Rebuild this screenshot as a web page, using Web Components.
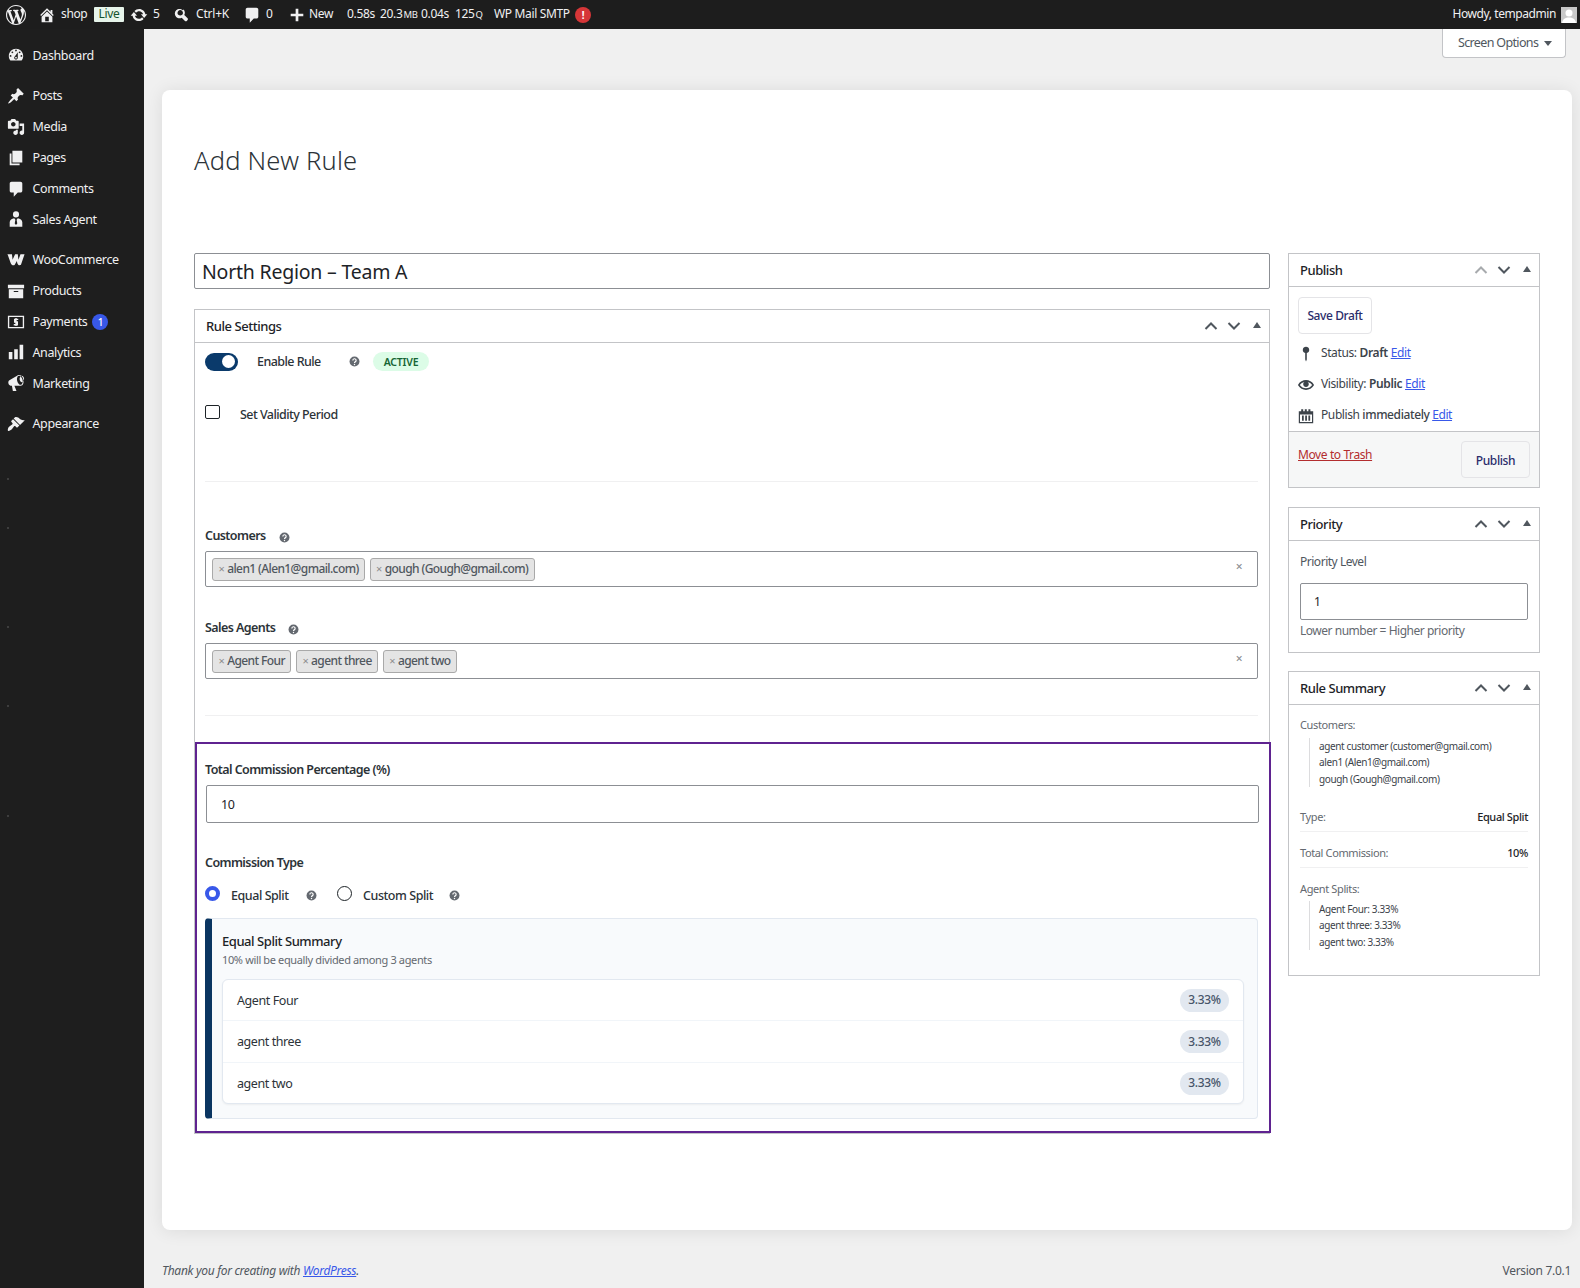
<!DOCTYPE html>
<html lang="en">
<head>
<meta charset="utf-8">
<title>Add New Rule</title>
<style>
    html, body { margin: 0; padding: 0; background: #f0f0f0; }
    body { font: 12.5px/1.4 "Noto Sans", "Open Sans", sans-serif; letter-spacing: -.3px; color: #1d2327; }
</style>
</head>
<body>
<wp-admin-bar></wp-admin-bar>
<wp-layout>
    <wp-side-menu slot="side">
        <wp-menu-item icon="dashboard" class="first">Dashboard</wp-menu-item>
        <wp-menu-item icon="pin" class="sep">Posts</wp-menu-item>
        <wp-menu-item icon="media">Media</wp-menu-item>
        <wp-menu-item icon="pages">Pages</wp-menu-item>
        <wp-menu-item icon="comment">Comments</wp-menu-item>
        <wp-menu-item icon="agent">Sales Agent</wp-menu-item>
        <wp-menu-item icon="woo" class="sep">WooCommerce</wp-menu-item>
        <wp-menu-item icon="archive">Products</wp-menu-item>
        <wp-menu-item icon="payment" badge="1">Payments</wp-menu-item>
        <wp-menu-item icon="chart">Analytics</wp-menu-item>
        <wp-menu-item icon="megaphone">Marketing</wp-menu-item>
        <wp-menu-item icon="brush" class="sep">Appearance</wp-menu-item>
    </wp-side-menu>

    <wp-screen-options></wp-screen-options>
    <wp-card>
        <wp-page-title slot="title">Add New Rule</wp-page-title>

        <wp-title-input slot="main">North Region – Team A</wp-title-input>
        <wp-postbox slot="main" heading="Rule Settings">
            <rule-settings></rule-settings>
        </wp-postbox>

        <wp-postbox slot="side" heading="Publish" noup>
            <publish-box></publish-box>
        </wp-postbox>
        <wp-postbox slot="side" heading="Priority">
            <priority-box></priority-box>
        </wp-postbox>
        <wp-postbox slot="side" heading="Rule Summary" style="margin-top:-1px">
            <summary-box></summary-box>
        </wp-postbox>
    </wp-card>
    <wp-footer></wp-footer>
</wp-layout>

<script>
(function () {
    const ICONS = {
        wp: '<path d="M20 10c0-5.51-4.49-10-10-10C4.48 0 0 4.49 0 10c0 5.52 4.48 10 10 10 5.51 0 10-4.48 10-10zM7.78 15.37L4.37 6.22c.55-.02 1.17-.08 1.17-.08.5-.06.44-1.13-.06-1.11 0 0-1.45.11-2.37.11-.18 0-.37 0-.58-.01C4.12 2.69 6.87 1.11 10 1.11c2.33 0 4.45.87 6.05 2.34-.68-.11-1.65.39-1.65 1.58 0 .74.45 1.36.9 2.1.35.61.55 1.36.55 2.46 0 1.49-1.4 5-1.4 5l-3.03-8.37c.54-.02.82-.17.82-.17.5-.05.44-1.25-.06-1.22 0 0-1.44.12-2.38.12-.87 0-2.33-.12-2.33-.12-.5-.03-.56 1.2-.06 1.22l.92.08 1.26 3.41zM17.41 10c.24-.64.74-1.87.43-4.25.7 1.29 1.05 2.71 1.05 4.25 0 3.29-1.73 6.24-4.4 7.78.97-2.59 1.94-5.2 2.92-7.78zM6.1 18.09C3.12 16.65 1.11 13.53 1.11 10c0-1.3.23-2.48.72-3.59C3.25 10.3 4.67 14.2 6.1 18.09zm4.03-6.63l2.58 6.98c-.86.29-1.76.45-2.71.45-.79 0-1.57-.11-2.29-.33.81-2.38 1.62-4.74 2.42-7.1z"/>',
        home: '<path d="M16 8.5l1.53 1.53-1.06 1.06L10 4.62l-6.47 6.47-1.06-1.06L10 2.5l4 4v-2h2v4zm-6-2.46l6 5.99V18H4v-5.97zM12 17v-5H8v5h4z"/>',
        update: '<path d="M10.2 3.28c3.53 0 6.43 2.61 6.92 6h2.08l-3.5 4-3.5-4h2.32c-.45-1.97-2.21-3.45-4.32-3.45-1.45 0-2.73.71-3.54 1.78L4.95 5.66C6.23 4.2 8.11 3.28 10.2 3.28zm-.4 13.44c-3.52 0-6.43-2.61-6.92-6H.8l3.5-4c1.17 1.33 2.33 2.67 3.5 4H5.48c.45 1.97 2.21 3.45 4.32 3.45 1.45 0 2.73-.71 3.54-1.78l1.71 1.95c-1.28 1.46-3.15 2.38-5.25 2.38z"/>',
        search: '<path d="M12.14 4.78c1.56 1.57 1.83 3.95.81 5.8l3.48 3.49c.51.51.51 1.33 0 1.83l-.92.92c-.5.5-1.32.5-1.83 0l-3.48-3.49c-1.85 1.03-4.23.76-5.8-.81-1.91-1.91-1.91-5.02 0-6.93 1.91-1.91 5.03-1.91 6.94 0zm-1.42 5.51c1.13-1.13 1.13-2.96 0-4.09s-2.96-1.13-4.09 0-1.13 2.96 0 4.09 2.96 1.13 4.09 0z"/>',
        comment: '<path d="M5 2h10c1.1 0 2 .9 2 2v8c0 1.1-.9 2-2 2h-3l-4.5 4.5V14H5c-1.1 0-2-.9-2-2V4c0-1.1.9-2 2-2z"/>',
        plus: '<path d="M17 8.500v3h-5.500V17h-3v-5.500H3v-3h5.500V3h3v5.500H17z"/>',
        dashboard: '<path fill-rule="evenodd" d="M3.76 16h12.48c1.1-1.37 1.76-3.11 1.76-5 0-4.42-3.58-8-8-8s-8 3.58-8 8c0 1.89.66 3.63 1.76 5zM10 4c.55 0 1 .45 1 1s-.45 1-1 1-1-.45-1-1 .45-1 1-1zM6 6c.55 0 1 .45 1 1s-.45 1-1 1-1-.45-1-1 .45-1 1-1zm8 0c.55 0 1 .45 1 1s-.45 1-1 1-1-.45-1-1 .45-1 1-1zm-5.37 5.55L12 7v6c0 1.1-.9 2-2 2s-2-.9-2-2c0-.57.24-1.08.63-1.45zM4 10c.55 0 1 .45 1 1s-.45 1-1 1-1-.45-1-1 .45-1 1-1zm12 0c.55 0 1 .45 1 1s-.45 1-1 1-1-.45-1-1 .45-1 1-1zm-5 3c0-.55-.45-1-1-1s-1 .45-1 1 .45 1 1 1 1-.45 1-1z"/>',
        pin: '<path d="M10.44 3.02l1.82-1.82 6.36 6.35-1.83 1.82c-1.05-.68-2.48-.57-3.41.36l-.75.75c-.92.93-1.04 2.35-.35 3.41l-1.83 1.82-2.41-2.41-2.8 2.79c-.42.42-3.38 2.71-3.8 2.29s1.86-3.39 2.28-3.81l2.79-2.79L4.1 9.36l1.83-1.82c1.05.69 2.48.57 3.4-.36l.75-.75c.93-.92 1.05-2.35.36-3.41z"/>',
        media: '<path fill-rule="evenodd" d="M13 11V4c0-.55-.45-1-1-1h-1.67L9 1H5L3.67 3H2c-.55 0-1 .45-1 1v7c0 .55.45 1 1 1h10c.55 0 1-.45 1-1zM7 4.500c1.380 0 2.500 1.120 2.500 2.500S8.380 9.500 7 9.500 4.500 8.380 4.500 7 5.620 4.500 7 4.500zM14 6h5v10.500c0 1.380-1.120 2.500-2.500 2.500S14 17.880 14 16.500s1.120-2.500 2.500-2.500c.17 0 .34.02.5.05V9h-3V6zm-4 8.050V13h2v3.500c0 1.380-1.120 2.500-2.500 2.500S7 17.880 7 16.500 8.120 14 9.500 14c.17 0 .34.02.5.05z"/>',
        pages: '<path d="M6 15V2h11v13H6zm-1 1h9v2H3V5h2v11z"/>',
        agent: '<path d="M10 1.500a3.400 3.400 0 1 1 0 6.800 3.400 3.400 0 0 1 0-6.800zM3 18.500v-5c0-2.400 2.400-4.200 5-4.400l1.300 1.600-.7 4.300 1.400 1.600 1.400-1.600-.7-4.300 1.300-1.600c2.600.2 5 2 5 4.400v5z"/>',
        woo: '<path d="M.5 3.500h5l.7 6.200 2.800-6.200h3l.7 6.200 2.300-6.200h4.500l-3.800 11.300c-.4 1.100-2.300 1.300-3.200.4-.8-.8-1.400-2.700-1.500-4.200l-2.400 4.200c-.6 1-2.500 1-3.200 0C3.800 13.800 2.500 8 .5 3.500z"/>',
        archive: '<path fill-rule="evenodd" d="M19 3H1v4h18V3zM2 8v10h16V8H2zm10.500 3.200h-5V10h5v1.200z"/>',
        payment: '<path fill-rule="evenodd" d="M1 3h18v14H1V3zm1.500 1.500v11h15v-11h-15z"/><path d="M12.500 7H8.500v3h3v3h-4M10 5.500V14.500" fill="none" stroke="currentColor" stroke-width="1.500"/>',
        chart: '<path d="M18 18V2h-4v16h4zm-6 0V7H8v11h4zm-6 0v-8H2v8h4z"/>',
        megaphone: '<path fill-rule="evenodd" d="M18.150 5.940c.46 1.620.38 3.220-.02 4.480-.42 1.280-1.260 2.180-2.300 2.480-.16.06-.26.06-.4.06-.06.02-.12.02-.18.02-.06.02-.14.02-.22.02H8.230l2.220 5.500c.02.14-.06.26-.14.34-.08.1-.24.16-.34.16H6.950c-.1 0-.26-.06-.34-.16-.08-.08-.16-.2-.14-.34l-1-5.500H4.250l-.02-.02c-.5.06-1.080-.18-1.540-.62s-.88-1.080-1.060-1.880c-.24-.8-.2-1.560-.02-2.200.18-.62.58-1.080 1.060-1.300l.02-.02 9-5.400c.1-.06.18-.1.24-.16.06-.04.14-.08.24-.12.16-.08.28-.12.500-.18 1.040-.3 2.240.1 3.220.98s1.840 2.240 2.260 3.860zm-2.580 5.980c.4-.1.74-.34 1.040-.7.58-.7.86-1.760.86-3.040 0-.64-.1-1.300-.26-2-.34-1.360-1.020-2.500-1.780-3.240s-1.680-1.100-2.460-.88c-.82.22-1.400.96-1.700 2-.32 1.040-.28 2.360.06 3.720.38 1.360 1 2.500 1.800 3.240.78.74 1.620 1.100 2.440.9zM14 5.500a2.500 3.500 0 1 1 0 .01z"/>',
        brush: '<path d="M14.480 11.060L7.410 3.990l1.500-1.500c.5-.56 2.300-.47 3.510.32 1.210.8 1.430 1.280 2.910 2.100 1.180.64 2.450 1.260 4.450.85zm-.71.71L6.700 4.700 4.930 6.470c-.39.39-.39 1.020 0 1.410l1.060 1.060c.39.39.39 1.030 0 1.420-.6.6-1.430 1.110-2.210 1.690-.35.26-.7.53-1.010.84C1.430 13.230.5 16.900 1.100 17.500c.17.17.44.2.66.2 1.240 0 2.820-1.130 3.600-1.900.33-.33.6-.68.86-1.020.58-.79 1.090-1.620 1.690-2.220.39-.39 1.020-.39 1.410 0l1.060 1.060c.39.39 1.020.39 1.410 0z"/>',
        status: '<path d="M10 1a4 4 0 0 1 1 7.870V17l-1 2.500L9 17V8.870A4 4 0 0 1 10 1z"/>',
        eye: '<path d="M19.700 9.400C17.700 6 14 3.900 10 3.900S2.300 6 .3 9.400L0 10l.3.6c2 3.400 5.700 5.500 9.700 5.500s7.700-2.100 9.700-5.500l.3-.6-.3-.6zM10 14.100c-3.100 0-6-1.600-7.700-4.100C3.600 8 5.700 6.600 8 6.100c-.9.6-1.500 1.700-1.500 2.900 0 1.900 1.600 3.500 3.500 3.500s3.500-1.600 3.500-3.500c0-1.200-.6-2.300-1.500-2.900 2.300.5 4.400 1.900 5.700 3.900-1.700 2.500-4.600 4.100-7.700 4.100z"/>',
        calendar: '<path fill-rule="evenodd" d="M1 4h3V1.500h2.500V4h2V1.500H11V4h2V1.500h2.500V4H19v15H1V4zm1.500 4v9.500h15V8h-15z"/><path d="M5 9.500h2.200V16H5zM9 9.500h2.200V16H9zM13 9.500h2.200V16H13z"/>',
        help: '<circle cx="10" cy="10" r="9"/><path d="M7 8a3 3 0 1 1 4.300 2.700c-.9.5-1.300 1-1.300 2" fill="none" stroke="#fff" stroke-width="2.200"/><circle cx="10" cy="15.300" r="1.300" fill="#fff"/>'
    };

    // plain shadow element: css + markup, nothing else
    function define(name, css, html) {
        const template = document.createElement('template');
        template.innerHTML = `<style>${css}</style>${html}`;
        customElements.define(name, class extends HTMLElement {
            constructor () {
                super();
                this.attachShadow({mode: 'open'});
                this.shadowRoot.appendChild(template.content.cloneNode(true));
            }
        });
    }

    class WpIcon extends HTMLElement {
        constructor () {
            super();
            this.attachShadow({mode: 'open'});
        }
        connectedCallback () {
            const size = this.getAttribute('size') || 20;
            this.shadowRoot.innerHTML = `<style>:host { display: inline-flex; flex: none; } svg { display: block; fill: currentColor; }</style>
                <svg width="${size}" height="${size}" viewBox="0 0 20 20">${ICONS[this.getAttribute('name')]}</svg>`;
        }
    }
    customElements.define('wp-icon', WpIcon);

    define('wp-admin-bar', `
        :host { display: flex; align-items: center; height: 29px; background: #1d1d1d; color: #f0f0f1; font-size: 12px; letter-spacing: -.35px; white-space: nowrap; }
        .i { display: flex; align-items: center; flex: none; }
        wp-icon { color: #f0f0f1; }
        .live { width: 30px; height: 15px; margin-left: 8px; background: #e6f4ea; color: #14532d; border-radius: 1px; display: flex; align-items: center; justify-content: center; font-size: 12px; }
        .alert { width: 16px; height: 16px; margin-left: 5px; border-radius: 50%; background: #d63638; color: #fff; font-size: 10px; font-weight: 700; display: flex; align-items: center; justify-content: center; }
        small { font-size: 9.500px; margin-left: 1px; }
        .howdy { margin-left: auto; margin-right: 5px; letter-spacing: -.42px; }
        .avatar { width: 16px; height: 16px; margin-right: 3px; background: #c8c8c8; overflow: hidden; }
        .avatar svg { display: block; }
    `, `
        <wp-icon class="i" name="wp" size="20" style="margin-left:6px"></wp-icon>
        <wp-icon class="i" name="home" size="18" style="margin-left:12px"></wp-icon>
        <span class="i" style="margin-left:5px;width:25px">shop</span>
        <span class="i live">Live</span>
        <wp-icon class="i" name="update" size="18" style="margin-left:6px"></wp-icon>
        <span class="i" style="margin-left:5px;width:7px">5</span>
        <wp-icon class="i" name="search" size="19" style="margin-left:12px"></wp-icon>
        <span class="i" style="margin-left:5px;width:34px;letter-spacing:-.2px">Ctrl+K</span>
        <wp-icon class="i" name="comment" size="18" style="margin-left:13px"></wp-icon>
        <span class="i" style="margin-left:5px;width:8px">0</span>
        <wp-icon class="i" name="plus" size="18" style="margin-left:14px"></wp-icon>
        <span class="i" style="margin-left:3px;width:24px">New</span>
        <span class="i" style="margin-left:14px;width:27px">0.58s</span>
        <span class="i" style="margin-left:6px;width:36px">20.3<small>MB</small></span>
        <span class="i" style="margin-left:5px;width:28px">0.04s</span>
        <span class="i" style="margin-left:6px;width:27px">125<small>Q</small></span>
        <span class="i" style="margin-left:12px;width:76px">WP Mail SMTP</span>
        <span class="i alert">!</span>
        <span class="i howdy">Howdy, tempadmin</span>
        <span class="i avatar"><svg width="16" height="16" viewBox="0 0 16 16"><circle cx="8" cy="6" r="3.500" fill="#fff"/><path d="M1 16c.5-4 3.500-5.500 7-5.500s6.500 1.500 7 5.500z" fill="#fff"/></svg></span>
    `);

    define('wp-layout', `
        :host { display: grid; grid-template-columns: 144px 1fr; min-height: 1259px; }
        .side { background: #1e1e1e; }
        .main { padding: 0 8px 0 18px; display: flex; flex-direction: column; }
    `, `
        <div class="side"><slot name="side"></slot></div>
        <div class="main"><slot></slot></div>
    `);

    define('wp-side-menu', `
        :host { display: block; padding-top: 11px; color: #f0f0f1; }
        i { display: block; width: 2px; height: 2px; background: #3d3d3d; margin-left: 7px; }
        ::slotted(.sep) { margin-top: 9.500px; }
    `, `
        <slot></slot>
        <i style="margin-top:39px"></i>
        <i style="margin-top:47px"></i>
        <i style="margin-top:97px"></i>
        <i style="margin-top:77px"></i>
        <i style="margin-top:108px"></i>
    `);

    class WpMenuItem extends HTMLElement {
        constructor () {
            super();
            this.attachShadow({mode: 'open'});
        }
        connectedCallback () {
            const badge = this.getAttribute('badge');
            this.shadowRoot.innerHTML = `<style>
                :host { display: flex; align-items: center; height: 30.900px; color: #f0f0f1; letter-spacing: -.38px; }
                wp-icon { margin-left: 7px; width: 18px; margin-right: 7.500px; }
                b { margin-left: 5px; width: 16px; height: 16px; border-radius: 50%; background: #3858e9; color: #fff; font-size: 10px; font-weight: 500; display: flex; align-items: center; justify-content: center; }
            </style>
            <wp-icon name="${this.getAttribute('icon')}" size="18"></wp-icon><slot></slot>${badge ? `<b>${badge}</b>` : ''}`;
        }
    }
    customElements.define('wp-menu-item', WpMenuItem);

    define('wp-screen-options', `
        :host { display: flex; align-self: flex-end; align-items: center; gap: 6px; width: 124px; height: 29px; box-sizing: border-box; margin-right: 6px; padding-left: 15px; background: #fff; border: 1px solid #c3c4c7; border-top: 0; border-radius: 0 0 4px 4px; color: #50575e; letter-spacing: -.65px; }
        i { border: 4px solid transparent; border-top: 5px solid #50575e; border-bottom: 0; }
    `, `<span>Screen Options</span><i></i>`);

    define('wp-card', `
        :host { display: block; box-sizing: border-box; height: 1140px; margin-top: 32px; padding: 0 32px; background: #fff; border-radius: 8px; box-shadow: 0 1px 18px rgba(0, 0, 0, .09); }
        .cols { display: grid; grid-template-columns: 1076px 252px; column-gap: 18px; }
        .col { display: flex; flex-direction: column; }
        .side { gap: 19px; }
    `, `
        <slot name="title"></slot>
        <div class="cols">
            <div class="col"><slot name="main"></slot></div>
            <div class="col side"><slot name="side"></slot></div>
        </div>
    `);

    define('wp-page-title', `
        :host { display: flex; align-items: center; height: 163px; padding-bottom: 22px; box-sizing: border-box; font-size: 25.500px; font-weight: 300; color: #2c3338; letter-spacing: .22px; }
    `, `<slot></slot>`);

    define('wp-title-input', `
        :host { display: flex; align-items: center; height: 36px; box-sizing: border-box; margin-bottom: 20px; padding: 2px 0 0 7px; border: 1px solid #8c8f94; border-radius: 2px; font-size: 19.500px; letter-spacing: -.22px; }
    `, `<slot></slot>`);

    class WpPostbox extends HTMLElement {
        constructor () {
            super();
            this.attachShadow({mode: 'open'});
        }
        connectedCallback () {
            const up = this.hasAttribute('noup') ? '#a7aaad' : '#50575e';
            this.shadowRoot.innerHTML = `<style>
                :host { display: block; border: 1px solid #c3c4c7; background: #fff; }
                header { display: flex; align-items: center; height: 32px; padding: 0 1px 0 11px; border-bottom: 1px solid #c3c4c7; font-size: 13px; font-weight: 500; color: #1d2327; letter-spacing: -.45px; }
                h2 { flex: 1; margin: 1px 0 0; font: inherit; }
                span { width: 23px; display: flex; justify-content: center; }
                svg { display: block; }
                .tri { margin-top: -2px; padding-left: 1px; box-sizing: border-box; }
            </style>
            <header><h2>${this.getAttribute('heading')}</h2>
                <span><svg width="14" height="10" viewBox="0 0 14 10"><path d="M1.500 8L7 2.500 12.500 8" fill="none" stroke="${up}" stroke-width="2"/></svg></span>
                <span><svg width="14" height="10" viewBox="0 0 14 10"><path d="M1.500 2L7 7.500 12.500 2" fill="none" stroke="#50575e" stroke-width="2"/></svg></span>
                <span class="tri"><svg width="8" height="6" viewBox="0 0 8 6"><path d="M4 0L8 6H0z" fill="#50575e"/></svg></span>
            </header><slot></slot>`;
        }
    }
    customElements.define('wp-postbox', WpPostbox);

    define('help-tip', `
        :host { display: inline-flex; flex: none; color: #646970; }
    `, `<wp-icon name="help" size="11"></wp-icon>`);

    define('tag-select', `
        :host { display: flex; align-items: center; gap: 4.500px; height: 36px; box-sizing: border-box; padding-left: 6px; padding-right: 15px; border: 1px solid #8c8f94; border-radius: 2px; color: #50575e; }
        .clear { margin-left: auto; margin-top: -3px; font-size: 12px; color: #8c8f94; }
    `, `<slot></slot><span class="clear">×</span>`);

    define('tag-chip', `
        :host { display: flex; align-items: center; height: 23px; box-sizing: border-box; padding: 0 5.500px; background: #e4e4e4; border: 1px solid #a9a9a9; border-radius: 3px; color: #50575e; font-size: 12px; letter-spacing: -.6px; }
        b { font-weight: 400; color: #8c8c8c; margin-right: 3px; font-size: 11px; }
    `, `<b>×</b><slot></slot>`);

    define('rule-settings', `
        :host { display: block; padding-left: 10px; padding-right: 11px; font-weight: 500; color: #2c3338; letter-spacing: -.55px; }
        .toggle-row { display: flex; align-items: center; height: 19px; margin-top: 9px; }
        .toggle { width: 33px; height: 18px; border-radius: 9px; background: #0a3a6b; display: flex; align-items: center; justify-content: flex-end; padding-right: 3px; box-sizing: border-box; }
        .toggle i { width: 13px; height: 13px; border-radius: 50%; background: #fff; }
        .toggle-row > span:first-of-type { padding-top: 1px; }
        .active { width: 56px; height: 19px; padding-top: 1px; box-sizing: border-box; margin-left: 13px; border-radius: 10px; background: #dcfce7; color: #166534; font-size: 10.500px; font-weight: 600; display: flex; align-items: center; justify-content: center; letter-spacing: -.2px; }
        .valid { display: flex; align-items: flex-start; height: 20px; margin-top: 34px; }
        .check { width: 15px; height: 14px; box-sizing: border-box; border: 1px solid #1d2327; border-radius: 2px; margin-right: 20px; }
        .valid span { margin-top: 1px; }
        hr { height: 1px; border: 0; background: #f0f0f1; margin: 56px 0 0; }
        .label { display: flex; align-items: center; height: 18px; font-weight: 600; letter-spacing: -.58px; }
        .label help-tip { margin-left: 13px; margin-top: 2px; }
        tag-select { margin-top: 6px; }
        .commission { margin: 26px -13px 0 -10px; height: 391px; box-sizing: border-box; border: 2px solid #5f2390; padding: 17px 0 0 8px; }
        .input { display: flex; align-items: center; width: 1053px; height: 38px; box-sizing: border-box; margin: 6px 0 0 1px; padding: 1px 0 0 14px; border: 1px solid #8c8f94; border-radius: 2px; font-weight: 400; color: #1d2327; letter-spacing: -.3px; }
        .radios { display: flex; align-items: center; height: 20px; margin-top: 13px; letter-spacing: -.45px; }
        .radios span { padding-top: 1px; }
        .radio { width: 15px; height: 15px; box-sizing: border-box; border-radius: 50%; border: 1px solid #1d2327; margin-top: -4px; }
        .radio.on { border: 4px solid #3858e9; }
        .split { width: 1053px; height: 201px; box-sizing: border-box; margin-top: 13px; background: #f8fafc; border: 1px solid #e2e8f0; border-left: 7px solid #0a3561; border-radius: 4px; padding: 12px 13px 0 10px; }
        h4 { margin: 0; height: 20px; display: flex; align-items: center; font: 500 13px/1 "Noto Sans", sans-serif; letter-spacing: -.45px; color: #1d2327; }
        p { margin: 1px 0 0; height: 16px; font-size: 11px; line-height: 16px; font-weight: 400; color: #646970; letter-spacing: -.36px; }
        .list { margin-top: 11px; height: 125px; box-sizing: border-box; background: #fff; border: 1px solid #e2e8f0; border-radius: 6px; box-shadow: 0 1px 2px rgba(0, 0, 0, .05); }
        .row { display: flex; align-items: center; justify-content: space-between; height: 41.300px; box-sizing: border-box; padding: 1px 14px 0; border-bottom: 1px solid #f1f5f9; font-weight: 400; color: #2c3338; letter-spacing: -.42px; }
        .row:last-child { border-bottom: 0; }
        .row b { width: 49px; height: 23px; border-radius: 12px; background: #e2e8f0; color: #475569; font-weight: 500; font-size: 12px; letter-spacing: -.3px; display: flex; align-items: center; justify-content: center; }
    `, `
        <div class="toggle-row">
            <div class="toggle"><i></i></div>
            <span style="margin-left:19px;width:92px">Enable Rule</span>
            <help-tip style="margin-top:-1px"></help-tip>
            <span class="active">ACTIVE</span>
        </div>
        <div class="valid"><div class="check"></div><span>Set Validity Period</span></div>
        <hr>
        <div class="label" style="margin-top:45px"><span>Customers</span><help-tip></help-tip></div>
        <tag-select>
            <tag-chip>alen1 (Alen1@gmail.com)</tag-chip>
            <tag-chip>gough (Gough@gmail.com)</tag-chip>
        </tag-select>
        <div class="label" style="margin-top:32px"><span>Sales Agents</span><help-tip></help-tip></div>
        <tag-select>
            <tag-chip>Agent Four</tag-chip>
            <tag-chip>agent three</tag-chip>
            <tag-chip>agent two</tag-chip>
        </tag-select>
        <hr style="margin-top:36px">
        <div class="commission">
            <div class="label">Total Commission Percentage (%)</div>
            <div class="input">10</div>
            <div class="label" style="margin-top:31px">Commission Type</div>
            <div class="radios">
                <div class="radio on"></div>
                <span style="margin-left:11px;width:75px">Equal Split</span>
                <help-tip></help-tip>
                <div class="radio" style="margin-left:20px"></div>
                <span style="margin-left:11px;width:86px">Custom Split</span>
                <help-tip></help-tip>
            </div>
            <div class="split">
                <h4>Equal Split Summary</h4>
                <p>10% will be equally divided among 3 agents</p>
                <div class="list">
                    <div class="row"><span>Agent Four</span><b>3.33%</b></div>
                    <div class="row"><span>agent three</span><b>3.33%</b></div>
                    <div class="row"><span>agent two</span><b>3.33%</b></div>
                </div>
            </div>
        </div>
    `);

    define('publish-box', `
        :host { display: block; color: #3c434a; font-size: 12px; letter-spacing: -.4px; }
        .top { padding: 10px 9px 0; height: 144px; box-sizing: border-box; }
        .btn { display: flex; align-items: center; justify-content: center; height: 37px; box-sizing: border-box; padding-top: 2px; border: 1px solid #e4e4e7; border-radius: 4px; color: #2a2d6b; font-weight: 500; }
        .row { display: flex; align-items: center; height: 31px; }
        .row wp-icon { width: 16px; margin-right: 7px; color: #3c434a; }
        .row b { font-weight: 600; margin: 0 3px; }
        a { color: #3858e9; text-decoration: underline; }
        .foot { display: flex; justify-content: space-between; height: 56px; box-sizing: border-box; padding: 9px 9px 0; border-top: 1px solid #c3c4c7; background: #f6f7f7; }
        .foot a { color: #b32d2e; margin-top: 6px; }
        .foot .btn { padding-top: 4px; }
    `, `
        <div class="top">
            <div class="btn" style="width:74px;margin-bottom:4px">Save Draft</div>
            <div class="row"><wp-icon name="status" size="16"></wp-icon><span>Status:<b>Draft</b><a>Edit</a></span></div>
            <div class="row"><wp-icon name="eye" size="16"></wp-icon><span>Visibility:<b>Public</b><a>Edit</a></span></div>
            <div class="row"><wp-icon name="calendar" size="16"></wp-icon><span>Publish <b style="margin:0;font-weight:500">immediately</b> <a>Edit</a></span></div>
        </div>
        <div class="foot"><a>Move to Trash</a><div class="btn" style="width:69px">Publish</div></div>
    `);

    define('priority-box', `
        :host { display: block; padding: 0 11px; height: 111px; box-sizing: border-box; color: #50575e; font-size: 12px; letter-spacing: -.48px; }
        .l { display: flex; align-items: center; height: 42px; padding-top: 1px; box-sizing: border-box; }
        .input { display: flex; align-items: center; height: 37px; box-sizing: border-box; padding: 2px 0 0 13px; border: 1px solid #8c8f94; border-radius: 2px; color: #1d2327; }
        .h { display: flex; align-items: center; height: 20px; margin-top: 1px; color: #646970; }
    `, `
        <div class="l">Priority Level</div>
        <div class="input">1</div>
        <div class="h">Lower number = Higher priority</div>
    `);

    define('summary-box', `
        :host { display: block; padding: 11px 11px 0; height: 270px; box-sizing: border-box; color: #646970; font-size: 11px; letter-spacing: -.38px; }
        .l { display: flex; align-items: center; height: 18px; }
        ul { list-style: none; margin: 4px 0 0 9px; padding: 0 0 0 9px; border-left: 1px solid #dcdcde; color: #3c434a; font-size: 10px; }
        li { display: flex; align-items: center; height: 16.300px; }
        .r { display: flex; align-items: center; justify-content: space-between; height: 28px; border-bottom: 1px solid #f0f0f1; }
        .r b { color: #1d2327; font-weight: 500; }
    `, `
        <div class="l">Customers:</div>
        <ul>
            <li>agent customer (customer@gmail.com)</li>
            <li>alen1 (Alen1@gmail.com)</li>
            <li>gough (Gough@gmail.com)</li>
        </ul>
        <div class="r" style="margin-top:16px"><span>Type:</span><b>Equal Split</b></div>
        <div class="r" style="margin-top:7px"><span>Total Commission:</span><b>10%</b></div>
        <div class="l" style="margin-top:12px">Agent Splits:</div>
        <ul style="margin-top:3px">
            <li>Agent Four: 3.33%</li>
            <li>agent three: 3.33%</li>
            <li>agent two: 3.33%</li>
        </ul>
    `);

    define('wp-footer', `
        :host { display: flex; justify-content: space-between; align-items: center; height: 58px; padding-top: 24px; padding-right: 1px; box-sizing: border-box; color: #50575e; font-size: 12px; letter-spacing: -.3px; }
        em a { color: #3858e9; text-decoration: underline; }
    `, `<em>Thank you for creating with <a>WordPress</a>.</em><span>Version 7.0.1</span>`);
})();
</script>
</body>
</html>
